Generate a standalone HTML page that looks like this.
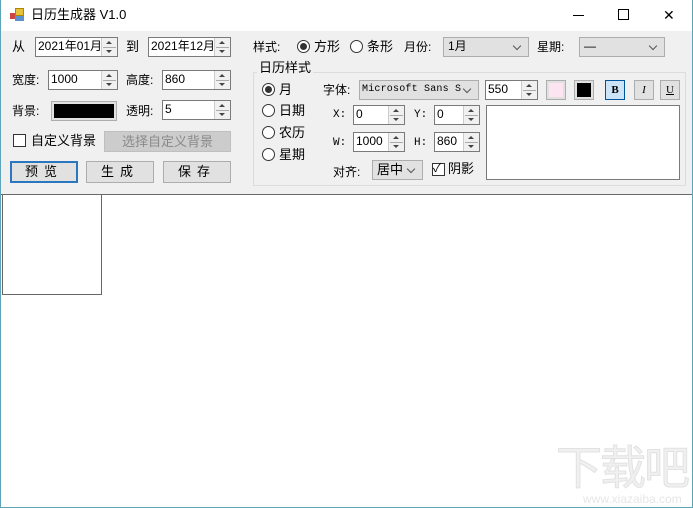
<!DOCTYPE html>
<html><head><meta charset="utf-8"><style>
*{box-sizing:border-box;margin:0;padding:0}
body{width:693px;height:508px;position:relative;overflow:hidden;background:#fff;font:12px "Liberation Sans","Noto Sans CJK SC",sans-serif;color:#000}
.a{position:absolute}
.t{position:absolute;white-space:nowrap;line-height:14px}
.in{position:absolute;background:#fff;border:1px solid #7a7a7a;padding:1px 0 0 2px;line-height:15px;font-size:12px}
.sp{position:absolute;right:0;top:0;bottom:0;width:16px;border-left:1px solid #ccc;background:#f0f0f0}
.sp:before,.sp:after{content:"";position:absolute;left:4px;border-left:3px solid transparent;border-right:3px solid transparent}
.sp:before{top:3px;border-bottom:3px solid #444}
.sp:after{bottom:3px;border-top:3px solid #444}
.sp i{position:absolute;left:1px;right:1px;top:50%;border-top:1px solid #aaa}
.btn{position:absolute;background:#e1e1e1;border:1px solid #adadad;text-align:center;line-height:20px;font-size:13px;letter-spacing:6px}
.cb{position:absolute;background:#e1e1e1;border:1px solid #adadad;padding-left:4px;line-height:17px;overflow:hidden;white-space:nowrap}
.cb:after{content:"";position:absolute;right:8px;top:5px;width:5px;height:5px;border-right:1px solid #555;border-bottom:1px solid #555;transform:rotate(45deg)}
.r{position:absolute;width:13px;height:13px;border:1px solid #333;border-radius:50%;background:#fff}
.r.on:after{content:"";position:absolute;left:2px;top:2px;width:7px;height:7px;border-radius:50%;background:#333}
.chk{position:absolute;width:13px;height:13px;border:1px solid #333;background:#fff}
.sq{position:absolute;width:20px;height:20px;border:1px solid #adadad;background:#e1e1e1}
.mono{font-family:"Liberation Mono",monospace;font-size:11px}
</style></head><body>
<div class="a" style="left:0;top:0;width:693px;height:508px;border:1px solid #5fa3b8;border-top:none"></div>
<div class="a" style="left:10px;top:13px;width:6px;height:6px;background:#c44"></div>
<div class="a" style="left:15px;top:8px;width:9px;height:8px;background:#e8c03a;border:1px solid #a80"></div>
<div class="a" style="left:15px;top:16px;width:9px;height:5px;background:#5a8fd0"></div>
<div class="t" style="left:31px;top:8px;font-size:13px">日历生成器 V1.0</div>
<div class="a" style="left:573px;top:15px;width:11px;border-top:1px solid #000"></div>
<div class="a" style="left:618px;top:9px;width:11px;height:11px;border:1px solid #000"></div>
<div class="t" style="left:663px;top:8px;font-size:14px">✕</div>
<div class="a" style="left:1px;top:31px;width:691px;height:163px;background:#f0f0f0"></div>
<div class="a" style="left:1px;top:194px;width:691px;border-top:1px solid #6a6a6a"></div>
<div class="a" style="left:2px;top:195px;width:100px;height:100px;border:1px solid #666;border-top:none"></div>

<div class="t" style="left:12px;top:40px;font-size:13px">从</div>
<div class="in" style="left:35px;top:37px;width:83px;height:20px">2021年01月<div class="sp"><i></i></div></div>
<div class="t" style="left:126px;top:40px;font-size:13px">到</div>
<div class="in" style="left:148px;top:37px;width:83px;height:20px">2021年12月<div class="sp"><i></i></div></div>

<div class="t" style="left:12px;top:73px">宽度:</div>
<div class="in" style="left:48px;top:70px;width:70px;height:20px">1000<div class="sp"><i></i></div></div>
<div class="t" style="left:126px;top:73px">高度:</div>
<div class="in" style="left:162px;top:70px;width:69px;height:20px">860<div class="sp"><i></i></div></div>

<div class="t" style="left:12px;top:104px">背景:</div>
<div class="a" style="left:51px;top:101px;width:66px;height:20px;border:1px solid #adadad;background:#e1e1e1;padding:2px"><div style="width:100%;height:100%;background:#000"></div></div>
<div class="t" style="left:126px;top:104px">透明:</div>
<div class="in" style="left:162px;top:100px;width:69px;height:20px">5<div class="sp"><i></i></div></div>

<div class="chk" style="left:13px;top:134px"></div>
<div class="t" style="left:31px;top:134px;font-size:13px">自定义背景</div>
<div class="a" style="left:104px;top:131px;width:127px;height:21px;background:#ccc;border:1px solid #bfbfbf;color:#8a8a8a;text-align:center;line-height:19px;font-size:13px">选择自定义背景</div>

<div class="btn" style="left:10px;top:161px;width:68px;height:22px;border:2px solid #2a77c0;line-height:18px">预览</div>
<div class="btn" style="left:86px;top:161px;width:68px;height:22px">生成</div>
<div class="btn" style="left:163px;top:161px;width:68px;height:22px">保存</div>

<div class="t" style="left:253px;top:40px">样式:</div>
<div class="r on" style="left:297px;top:40px"></div>
<div class="t" style="left:314px;top:40px;font-size:13px">方形</div>
<div class="r" style="left:350px;top:40px"></div>
<div class="t" style="left:367px;top:40px;font-size:13px">条形</div>
<div class="t" style="left:404px;top:40px">月份:</div>
<div class="cb" style="left:443px;top:37px;width:86px;height:20px">1月</div>
<div class="t" style="left:537px;top:40px">星期:</div>
<div class="cb" style="left:579px;top:37px;width:86px;height:20px">—</div>

<div class="a" style="left:253px;top:72px;width:433px;height:114px;border:1px solid #dcdcdc"></div>
<div class="t" style="left:257px;top:61px;background:#f0f0f0;padding:0 2px;font-size:13px">日历样式</div>

<div class="r on" style="left:262px;top:83px"></div><div class="t" style="left:279px;top:83px;font-size:13px">月</div>
<div class="r" style="left:262px;top:104px"></div><div class="t" style="left:279px;top:104px;font-size:13px">日期</div>
<div class="r" style="left:262px;top:126px"></div><div class="t" style="left:279px;top:126px;font-size:13px">农历</div>
<div class="r" style="left:262px;top:148px"></div><div class="t" style="left:279px;top:148px;font-size:13px">星期</div>

<div class="t" style="left:323px;top:83px">字体:</div>
<div class="cb mono" style="left:359px;top:80px;width:120px;height:20px;padding-left:2px;font-size:10px;letter-spacing:0.2px">Microsoft Sans S</div>
<div class="in" style="left:485px;top:80px;width:53px;height:20px">550<div class="sp"><i></i></div></div>
<div class="sq" style="left:546px;top:80px;padding:2px"><div style="width:100%;height:100%;background:#fce4f0"></div></div>
<div class="sq" style="left:574px;top:80px;padding:2px"><div style="width:100%;height:100%;background:#000"></div></div>
<div class="sq" style="left:605px;top:80px;background:#cce4f7;border-color:#005499;text-align:center;font:bold 11px 'Liberation Serif',serif;line-height:18px">B</div>
<div class="sq" style="left:634px;top:80px;text-align:center;font:italic 11px 'Liberation Serif',serif;line-height:18px">I</div>
<div class="sq" style="left:660px;top:80px;text-align:center;font:11px 'Liberation Serif',serif;text-decoration:underline;line-height:18px">U</div>

<div class="t mono" style="left:333px;top:108px">X:</div>
<div class="in" style="left:353px;top:105px;width:52px;height:20px">0<div class="sp"><i></i></div></div>
<div class="t mono" style="left:414px;top:108px">Y:</div>
<div class="in" style="left:434px;top:105px;width:46px;height:20px">0<div class="sp"><i></i></div></div>
<div class="t mono" style="left:333px;top:136px">W:</div>
<div class="in" style="left:353px;top:132px;width:52px;height:20px">1000<div class="sp"><i></i></div></div>
<div class="t mono" style="left:414px;top:136px">H:</div>
<div class="in" style="left:434px;top:132px;width:46px;height:20px">860<div class="sp"><i></i></div></div>
<div class="a" style="left:486px;top:105px;width:194px;height:75px;background:#fff;border:1px solid #7a7a7a"></div>

<div class="t" style="left:333px;top:165px">对齐:</div>
<div class="cb" style="left:372px;top:160px;width:51px;height:20px;font-size:13px">居中</div>
<div class="chk" style="left:432px;top:163px"></div>
<div class="t" style="left:433px;top:161px;font-size:12px">✓</div>
<div class="t" style="left:448px;top:162px;font-size:13px">阴影</div>

<div class="t" style="left:556px;top:444px;font-size:46px;line-height:48px;color:#f0f0f0;letter-spacing:-2px;-webkit-text-stroke:1px #e2e2e2">下载吧</div>
<div class="t" style="left:583px;top:492px;font-size:12px;color:#e6e6e6">www.xiazaiba.com</div>
</body></html>
